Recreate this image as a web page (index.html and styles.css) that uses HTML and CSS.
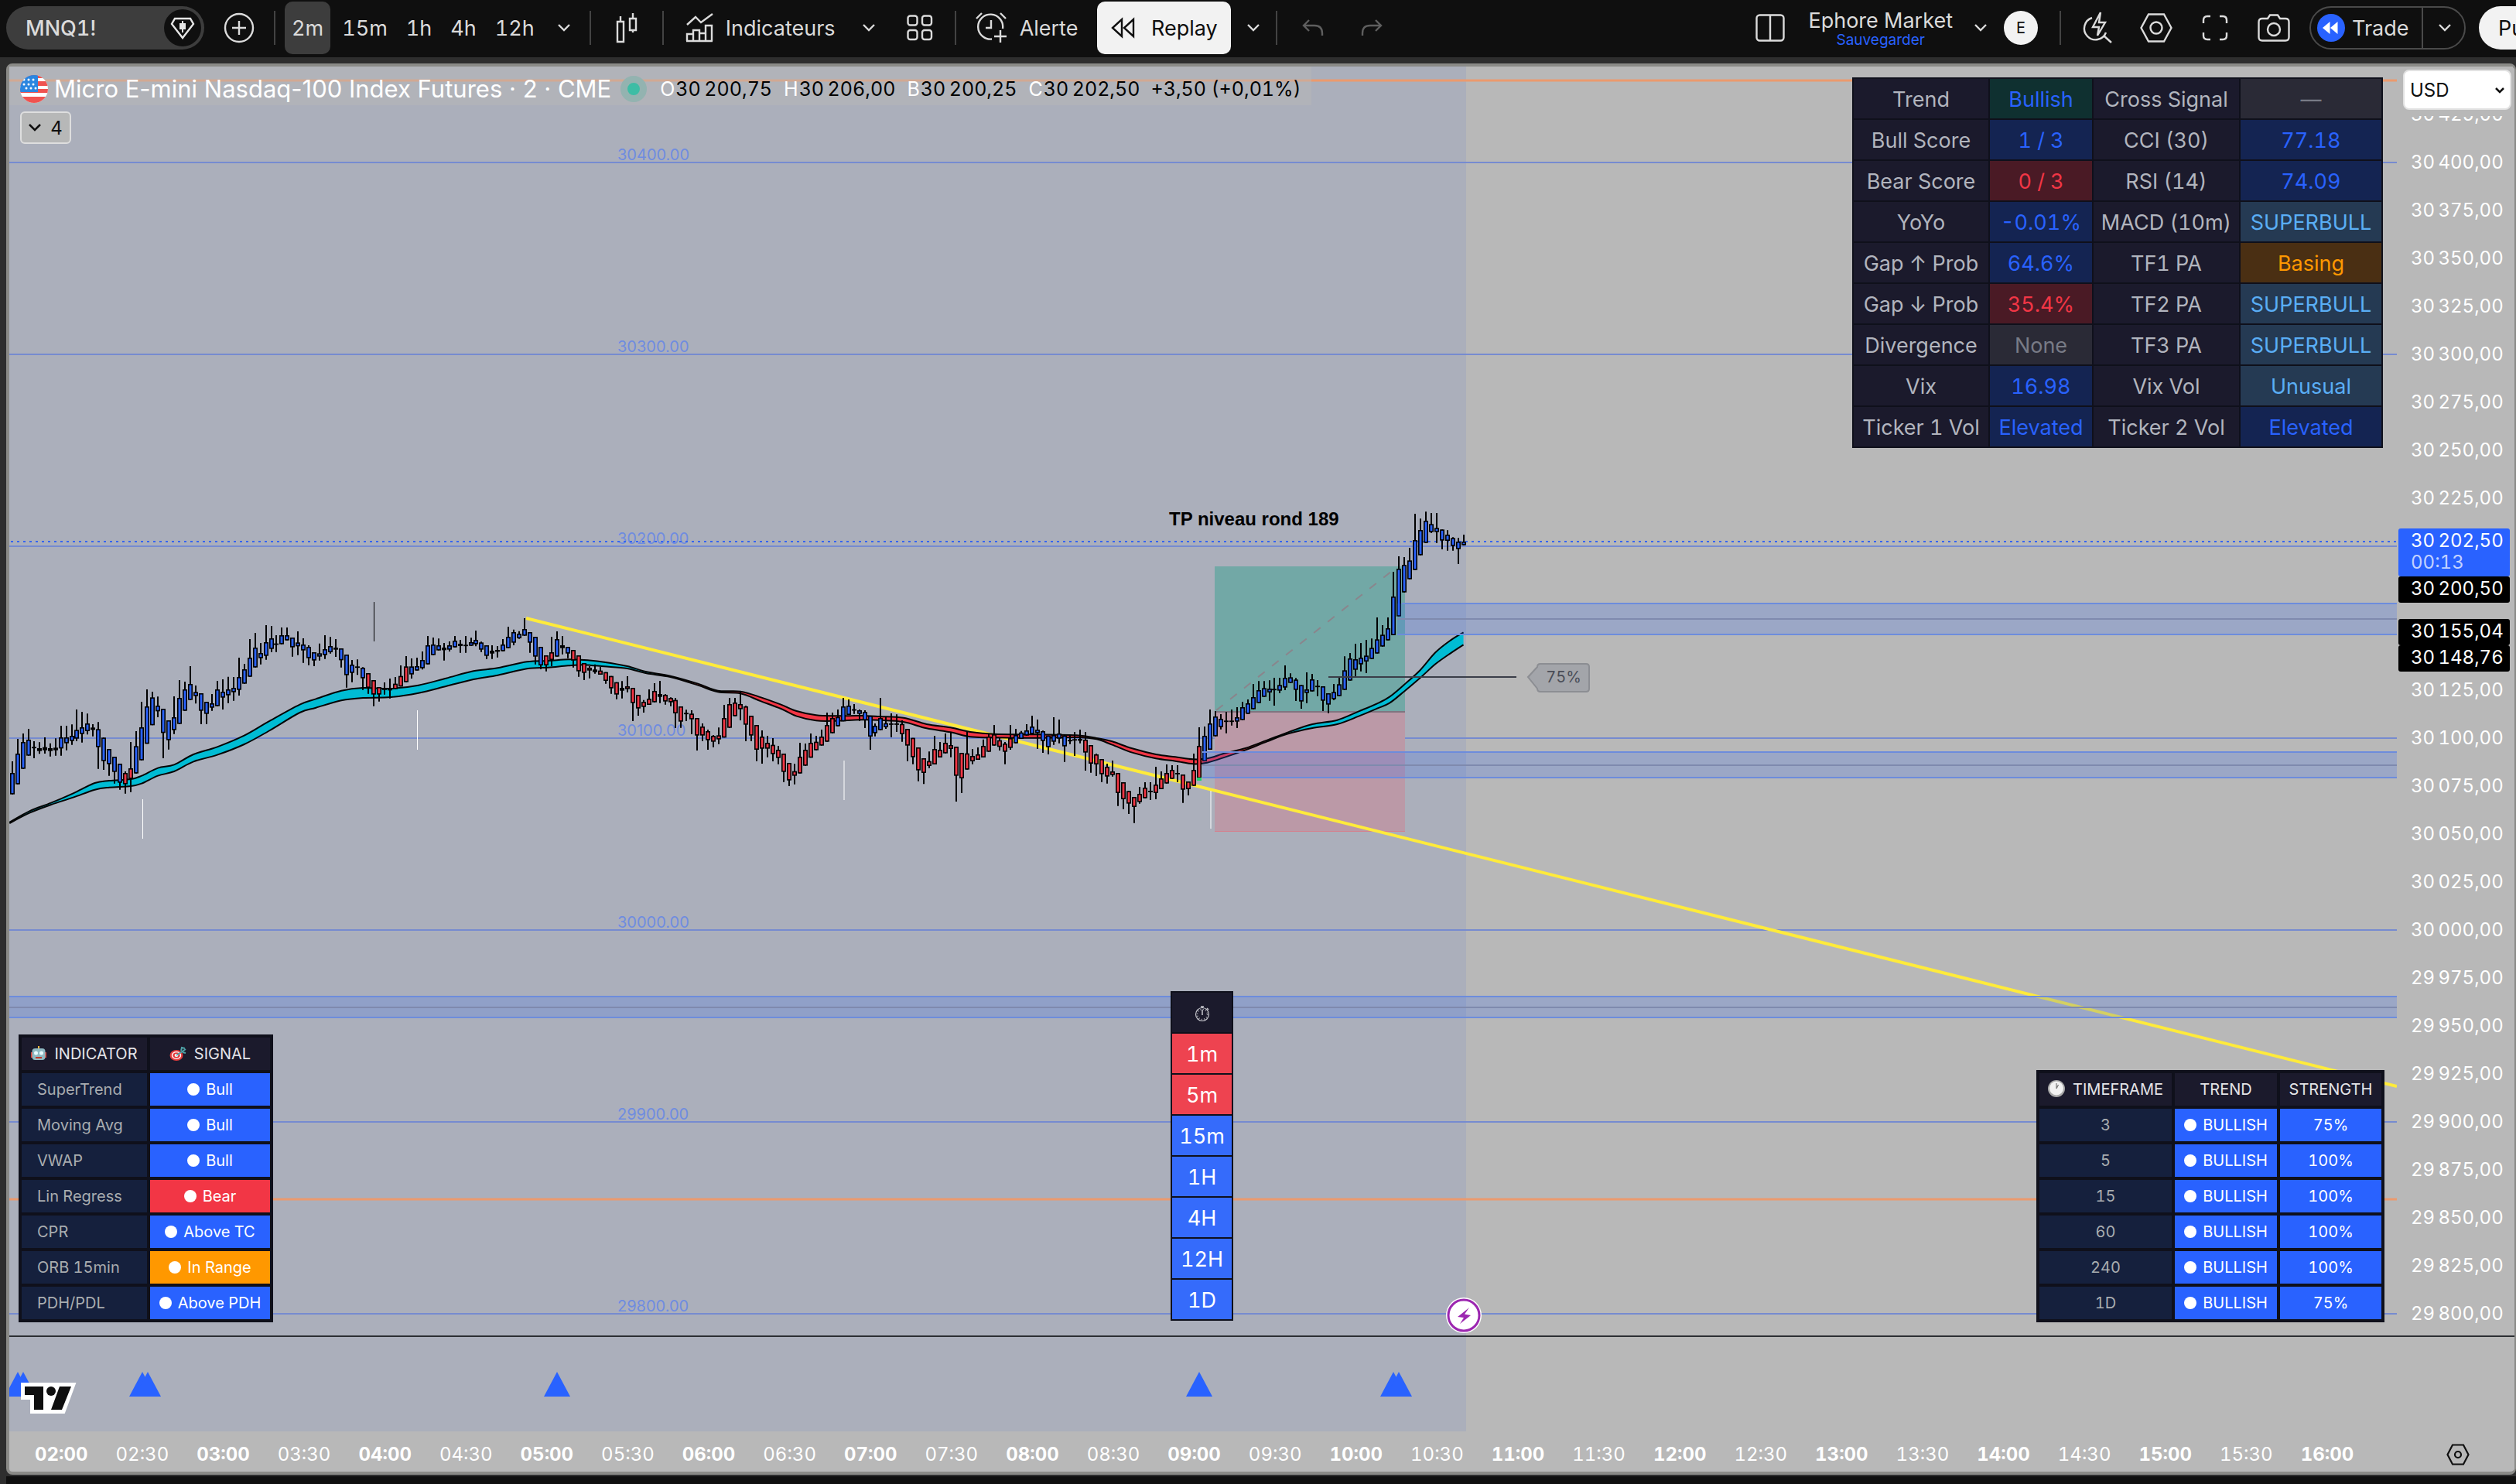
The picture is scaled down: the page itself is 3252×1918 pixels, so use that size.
FILE: index.html
```html
<!DOCTYPE html>
<html lang="fr">
<head>
<meta charset="utf-8">
<title>MNQ1! 30 202,50</title>
<link rel="stylesheet" href="styles.css">
</head>
<body>
<header class="toolbar">
  <button class="symbol" type="button">
    <span>MNQ1!</span>
    <svg class="symbol-badge" viewBox="0 0 48 48" width="48" height="48"><circle cx="24" cy="24" r="24" fill="#0f0f0f"/><path d="M14 12h20l4 7-14 18L10 19z" fill="none" stroke="#e6e6e6" stroke-width="2.4"/><path d="M20 18h8v8h-8z" fill="#e6e6e6"/><path d="M24 15v15" stroke="#e6e6e6" stroke-width="2"/></svg>
  </button>
  <button class="tool add" type="button" aria-label="Comparer"><svg viewBox="0 0 40 40" width="40" height="40"><circle cx="20" cy="20" r="18"/><path d="M20 11v18M11 20h18"/></svg></button>
  <span class="sep"></span>
  <div class="intervals">
    <button class="tool active" type="button">2m</button>
    <button class="tool" type="button">15m</button>
    <button class="tool" type="button">1h</button>
    <button class="tool" type="button">4h</button>
    <button class="tool" type="button">12h</button>
  </div>
  <button class="tool caret wide" type="button" aria-label="Intervalles"><svg viewBox="0 0 16 10" width="16" height="10"><path d="M1 1l7 7 7-7"/></svg></button>
  <span class="sep"></span>
  <button class="tool candle-btn" type="button" aria-label="Type de graphique"><svg viewBox="0 0 28 40" width="28" height="40"><path d="M2 12h8v26H2zM18 8h8v15h-8zM6 12V5M22 8V1M22 23v3"/></svg></button>
  <span class="sep"></span>
  <button class="tool indicators" type="button"><svg viewBox="0 0 36 38" width="36" height="38"><path d="M2 15L13 5l7 7L35 1M2 36V27h8v9M10 36V22h8v14M18 36V26h8M26 36V16h8v20M1 36h34"/></svg><span>Indicateurs</span></button>
  <button class="tool caret" type="button" aria-label="Favoris"><svg viewBox="0 0 16 10" width="16" height="10"><path d="M1 1l7 7 7-7"/></svg></button>
  <button class="tool templates" type="button" aria-label="Modèles"><svg viewBox="0 0 34 34" width="34" height="34"><rect x="1.5" y="1.5" width="12" height="12" rx="3"/><rect x="20" y="1.5" width="12" height="12" rx="3"/><rect x="1.5" y="20" width="12" height="12" rx="3"/><rect x="20" y="20" width="12" height="12" rx="3"/></svg></button>
  <span class="sep"></span>
  <button class="tool alert" type="button"><svg viewBox="0 0 42 42" width="42" height="42"><path d="M22 35.500A16 16 0 1 1 36 22M21 11v10h-7M2 9l7-7M33 2l7 7M33 24v16M25 32h16"/></svg><span>Alerte</span></button>
  <button class="tool replay" type="button"><svg viewBox="0 0 32 28" width="32" height="28"><path d="M14 3v22L2 14zM29 3v22L17 14z"/></svg><span>Replay</span></button>
  <button class="tool caret" type="button" aria-label="Options"><svg viewBox="0 0 16 10" width="16" height="10"><path d="M1 1l7 7 7-7"/></svg></button>
  <span class="sep"></span>
  <button class="tool history first" type="button" aria-label="Annuler"><svg viewBox="0 0 28 24" width="28" height="24"><path d="M9 2L2 9l7 7M2 9h14q10 0 10 10v3"/></svg></button>
  <button class="tool history" type="button" aria-label="Rétablir"><svg viewBox="0 0 28 24" width="28" height="24"><path d="M19 2l7 7-7 7M26 9H12Q2 9 2 19v3"/></svg></button>

  <div class="right">
    <button class="tool layout-btn" type="button" aria-label="Disposition"><svg viewBox="0 0 38 36" width="38" height="36"><rect x="1.500" y="1.500" width="35" height="33" rx="4"/><path d="M19 2v32"/></svg></button>
    <div class="account"><span class="name">Ephore Market</span><a href="#save">Sauvegarder</a></div>
    <button class="tool caret" type="button" aria-label="Dispositions"><svg viewBox="0 0 16 10" width="16" height="10"><path d="M1 1l7 7 7-7"/></svg></button>
    <span class="avatar">E</span>
    <span class="sep"></span>
    <button class="tool icon" type="button" aria-label="Recherche rapide"><svg viewBox="0 0 40 42" width="40" height="42"><path d="M13 8A14.500 14.500 0 1 0 31 27M28 31l10 9M24 1L14 20h8l-2 11 10-17h-8z"/></svg></button>
    <button class="tool icon" type="button" aria-label="Paramètres"><svg viewBox="0 0 42 38" width="42" height="38"><path d="M11 1.500h20L40.500 19 31 36.500H11L1.500 19z"/><circle cx="21" cy="19" r="7.500"/></svg></button>
    <button class="tool icon" type="button" aria-label="Plein écran"><svg viewBox="0 0 34 34" width="34" height="34"><path d="M2 11V7q0-5 5-5h4M23 2h4q5 0 5 5v4M32 23v4q0 5-5 5h-4M11 32H7q-5 0-5-5v-4"/></svg></button>
    <button class="tool icon" type="button" aria-label="Capture"><svg viewBox="0 0 42 36" width="42" height="36"><path d="M6 6h7l3-4.500h10L29 6h7q4.500 0 4.500 4.500V30q0 4.500-4.500 4.500H6Q1.500 34.500 1.500 30V10.500Q1.500 6 6 6z"/><circle cx="21" cy="20" r="8"/></svg></button>
    <div class="trade">
      <button class="trade-main" type="button"><svg viewBox="0 0 36 36" width="36" height="36"><circle cx="18" cy="18" r="18" fill="#2962ff"/><path d="M16.500 10v16L7 18zM26.500 10v16L17 18z" fill="#fff"/></svg><span>Trade</span></button>
      <button class="trade-more" type="button" aria-label="Brokers"><svg viewBox="0 0 16 10" width="16" height="10"><path d="M1 1l7 7 7-7"/></svg></button>
    </div>
    <button class="publish" type="button">Publier</button>
  </div>
</header>

<main class="panel">
  <section class="plot">
    <svg id="plot" class="canvas" viewBox="12 86 3086 1640" preserveAspectRatio="none">
      <rect class="session" x="12" y="86" width="1883" height="1640"/>
      <g id="grid"></g>
      <g class="level"><path d="M12 104H3098"/><path d="M12 1550H3098"/></g>
      <path class="last-price" d="M14 700H3098"/>
      <rect class="profit" x="1570" y="732" width="246" height="188"/>
      <rect class="loss" x="1570" y="920" width="246" height="155"/>
      <path class="entry" d="M1570 920h246"/>
      <path class="stop" d="M1570 1074.500h246"/>
      <path class="target" d="M1572 918L1804 734"/>
      <path class="trendline" d="M680 799L3098 1404"/>
      <g id="ribbon"></g>
      <path class="mark-light" d="M184.500 1033v51M539.500 918v51M1091 983v51M1565 1022v49"/>
      <path class="mark-dark" d="M483.500 778v51"/>
      <g id="bars"></g>
      <path class="mark-buy" d="M1547 1005h6v4h-6z"/>
      <g class="zone">
        <path d="M1806 780H3098V820H1806z"/><path d="M1554 972H3098v33H1554z"/><path d="M12 1288H3098v27H12z"/>
      </g>
      <path class="zone-edge" d="M1812 780H3098M1806 820H3098M1554 972H3098M1554 1005H3098M12 1288H3098M12 1315H3098"/>
      <path class="zone-mid" d="M1806 800H3098M1554 989H3098M12 1302H3098"/>
      <path class="ray" d="M1717 875H1960"/>
      <path class="tag" d="M1975 875l12-13q0-4 4-4h59q4 0 4 4v28q0 4-4 4h-59q-4 0-4-4z"/>
      <text class="tag-text" x="2021" y="882">75%</text>
      <text class="note" x="1511" y="679">TP niveau rond 189</text>
      <g class="event"><circle class="halo" cx="1892" cy="1700" r="23"/><circle class="ring" cx="1892" cy="1700" r="20"/><path d="M1899 1690l-15 12 8 1-5 8 14-11-8-1.500z"/></g>
    </svg>

    <div class="legend">
      <svg viewBox="0 0 36 36" width="36" height="36"><defs><clipPath id="round"><circle cx="18" cy="18" r="18"/></clipPath></defs><g clip-path="url(#round)"><path d="M0 0h36v36H0z" fill="#fff"/><path d="M0 0h36v4H0zM0 8h36v6H0zM0 18h36v5H0zM0 28h36v8H0z" fill="#ef5350"/><path d="M0 0h23v22H0z" fill="#2a86e0"/><g fill="#fff"><circle cx="5" cy="6" r="1.500"/><circle cx="11" cy="6" r="1.500"/><circle cx="17" cy="6" r="1.500"/><circle cx="5" cy="12" r="1.500"/><circle cx="11" cy="12" r="1.500"/><circle cx="17" cy="12" r="1.500"/><circle cx="8" cy="17" r="1.500"/><circle cx="14" cy="17" r="1.500"/><circle cx="20" cy="17" r="1.500"/></g></g></svg>
      <h1>Micro E-mini Nasdaq-100 Index Futures · 2 · CME</h1>
      <span class="status"></span>
      <dl>
        <div><dt>O</dt><dd>30&#8201;200,75</dd></div>
        <div><dt>H</dt><dd>30&#8201;206,00</dd></div>
        <div><dt>B</dt><dd>30&#8201;200,25</dd></div>
        <div><dt>C</dt><dd>30&#8201;202,50</dd></div>
      </dl>
      <span class="change">+3,50 (+0,01%)</span>
    </div>
    <button class="collapse" type="button"><svg viewBox="0 0 16 10" width="16" height="10"><path d="M1 1l7 7 7-7"/></svg><span>4</span></button>

    <table class="board scores">
      <colgroup><col class="c1"><col class="c2"><col class="c3"><col class="c4"></colgroup>
      <tbody>
      <tr><th>Trend</th><td class="teal">Bullish</td><th>Cross Signal</th><td class="mute">—</td></tr>
      <tr><th>Bull Score</th><td class="blue">1 / 3</td><th>CCI (30)</th><td class="blue">77.18</td></tr>
      <tr><th>Bear Score</th><td class="red">0 / 3</td><th>RSI (14)</th><td class="blue">74.09</td></tr>
      <tr><th>YoYo</th><td class="blue">-0.01%</td><th>MACD (10m)</th><td class="sky">SUPERBULL</td></tr>
      <tr><th>Gap ↑ Prob</th><td class="blue">64.6%</td><th>TF1 PA</th><td class="amber">Basing</td></tr>
      <tr><th>Gap ↓ Prob</th><td class="red">35.4%</td><th>TF2 PA</th><td class="sky">SUPERBULL</td></tr>
      <tr><th>Divergence</th><td class="mute">None</td><th>TF3 PA</th><td class="sky">SUPERBULL</td></tr>
      <tr><th>Vix</th><td class="blue">16.98</td><th>Vix Vol</th><td class="sky">Unusual</td></tr>
      <tr><th>Ticker 1 Vol</th><td class="blue">Elevated</td><th>Ticker 2 Vol</th><td class="blue">Elevated</td></tr>
      </tbody>
    </table>

    <table class="board signals">
      <colgroup><col class="c1"><col class="c2"></colgroup>
      <thead><tr>
        <th><svg viewBox="0 0 20 20" width="20" height="20"><path d="M9 0h2v4H9z" fill="#f4b63f"/><path d="M0 8h2v7H0zM18 8h2v7h-2z" fill="#d9433a"/><rect x="1.500" y="3" width="17" height="15" rx="4" fill="#8fb9c2"/><circle cx="6.500" cy="9" r="2.500" fill="#e8fbff"/><circle cx="13.500" cy="9" r="2.500" fill="#e8fbff"/><path d="M6 14h8v2H6z" fill="#c0392b"/></svg>INDICATOR</th>
        <th><svg viewBox="0 0 22 20" width="22" height="20"><ellipse cx="9" cy="12" rx="8.500" ry="7" fill="#e23b3b"/><ellipse cx="9" cy="12" rx="6.200" ry="5" fill="#fff"/><ellipse cx="9" cy="12" rx="4.800" ry="3.800" fill="#e23b3b"/><ellipse cx="9" cy="12" rx="2.400" ry="1.900" fill="#fff"/><path d="M9 12L21 4M15 6l1-4 4 1M17 8l4 1" stroke="#4fa3a8" stroke-width="2" fill="none"/></svg>SIGNAL</th>
      </tr></thead>
      <tbody>
      <tr><th>SuperTrend</th><td class="bull"><i></i>Bull</td></tr>
      <tr><th>Moving Avg</th><td class="bull"><i></i>Bull</td></tr>
      <tr><th>VWAP</th><td class="bull"><i></i>Bull</td></tr>
      <tr><th>Lin Regress</th><td class="bear"><i></i>Bear</td></tr>
      <tr><th>CPR</th><td class="bull"><i></i>Above TC</td></tr>
      <tr><th>ORB 15min</th><td class="range"><i></i>In Range</td></tr>
      <tr><th>PDH/PDL</th><td class="bull"><i></i>Above PDH</td></tr>
      </tbody>
    </table>

    <table class="board frames">
      <thead><tr><th aria-label="Intervalle"><svg viewBox="0 0 22 22" width="22" height="22" fill="none" stroke="#c9c9cf"><circle cx="11" cy="12" r="8.500" stroke-width="1.200"/><circle cx="11" cy="12" r="6.500" stroke-width="1.500" stroke-dasharray="1 2.400"/><path d="M11 13V6M9 2h4M11 2v2M17 4l2 2" stroke-width="1.500"/></svg></th></tr></thead>
      <tbody>
      <tr><td class="bear">1m</td></tr><tr><td class="bear">5m</td></tr><tr><td class="bull">15m</td></tr><tr><td class="bull">1H</td></tr><tr><td class="bull">4H</td></tr><tr><td class="bull">12H</td></tr><tr><td class="bull">1D</td></tr>
      </tbody>
    </table>

    <table class="board strength">
      <colgroup><col class="c1"><col class="c2"><col class="c3"></colgroup>
      <thead><tr>
        <th><svg viewBox="0 0 22 22" width="22" height="22"><circle cx="11" cy="11" r="11" fill="#a9a9a9"/><circle cx="11" cy="10.500" r="9" fill="#f2f2f2"/><path d="M11 11V4M11 11l2.500-5" stroke="#777" stroke-width="1.200"/></svg>TIMEFRAME</th><th>TREND</th><th>STRENGTH</th>
      </tr></thead>
      <tbody>
      <tr><th>3</th><td class="bull"><i></i>BULLISH</td><td class="bull">75%</td></tr>
      <tr><th>5</th><td class="bull"><i></i>BULLISH</td><td class="bull">100%</td></tr>
      <tr><th>15</th><td class="bull"><i></i>BULLISH</td><td class="bull">100%</td></tr>
      <tr><th>60</th><td class="bull"><i></i>BULLISH</td><td class="bull">100%</td></tr>
      <tr><th>240</th><td class="bull"><i></i>BULLISH</td><td class="bull">100%</td></tr>
      <tr><th>1D</th><td class="bull"><i></i>BULLISH</td><td class="bull">75%</td></tr>
      </tbody>
    </table>
  </section>

  <aside class="prices">
    <svg id="prices" class="canvas" viewBox="3098 86 152 1640" preserveAspectRatio="none"></svg>
    <label class="currency" aria-label="Devise">
      <select aria-label="Devise"><option>USD</option></select>
      <svg viewBox="0 0 14 10" width="14" height="10"><path d="M2 2l5 5 5-5"/></svg>
    </label>
  </aside>

  <section class="signal-pane">
    <svg class="canvas" viewBox="12 1728 3238 122" preserveAspectRatio="none">
      <rect class="session" x="12" y="1728" width="1883" height="122"/>
      <g id="arrows" class="arrows"></g>
      <g class="logo"><path class="logo-rim" d="M28 1788H97L83 1826H40V1808H28z"/><path d="M32 1792H56V1822H44V1803H32zM77 1792H92L80 1822H66z"/><circle cx="66" cy="1798" r="6"/></g>
    </svg>
  </section>

  <footer class="times">
    <div id="times" class="time-list"></div>
    <button class="axis-settings" type="button" aria-label="Réglages de l'axe"><svg viewBox="0 0 30 28" width="30" height="28"><path d="M8 1.500h14L28.500 14 22 26.500H8L1.500 14z"/><circle cx="15" cy="14" r="4"/></svg></button>
  </footer>
</main>
<div class="dock"></div>
<script src="chart.js"></script>
</body>
</html>
```
FILE: styles.css
```css
* { box-sizing: border-box; }
body {
  margin: 0;
  min-height: 100vh;
  display: flex;
  flex-direction: column;
  background: #2e2e2e;
  color: #dbdbdb;
  font-family: Inter, "Liberation Sans", sans-serif;
  font-variant-numeric: tabular-nums;
  overflow: hidden;
}
button, select { font: inherit; font-variant-numeric: inherit; color: inherit; margin: 0; padding: 0; border: 0; background: none; }
svg { display: block; flex: none; }

/* Toolbar */
.toolbar {
  height: 74px;
  flex: none;
  display: flex;
  align-items: center;
  padding: 0 0 2px 8px;
  background: #0f0f0f;
  font-size: 27px;
  overflow: hidden;
}
.toolbar svg { fill: none; stroke: #dbdbdb; stroke-width: 2.4; }
.toolbar .symbol-badge { stroke: none; }
.symbol {
  width: 256px;
  height: 56px;
  display: flex;
  align-items: center;
  justify-content: space-between;
  padding: 0 4px 0 25px;
  border-radius: 28px;
  background: #3d3d3d;
  font-weight: 500;
}
.tool { display: flex; align-items: center; justify-content: center; height: 68px; border-radius: 10px; flex: none; }
.add { width: 90px; }
.sep { width: 2px; height: 44px; background: #434343; flex: none; }
.intervals { display: flex; gap: 6px; margin-left: 12px; }
.intervals .tool { padding: 0 9px; }
.active { background: #3d3d3d; }
.caret { width: 56px; }
.caret.wide { width: 58px; margin-right: 4px; }
.candle-btn { width: 92px; }
.indicators { gap: 16px; padding-left: 28px; }
.indicators + .caret { width: 86px; }
.templates { width: 46px; margin-right: 22px; }
.alert { gap: 16px; padding: 0 25px 0 24px; }
.replay { gap: 20px; width: 173px; background: #f2f2f2; color: #0f0f0f; }
.toolbar .replay svg { stroke: #0f0f0f; }
.replay + .caret { width: 58px; }
.history { width: 76px; }
.history.first { margin-left: 8px; }
.toolbar .history svg { stroke: #5e5e5e; }
.right { display: flex; align-items: center; margin-left: auto; margin-right: -80px; }
.layout-btn { width: 98px; }
.account { display: flex; flex-direction: column; align-items: center; padding-top: 4px; line-height: 28px; }
.account a { color: #2962ff; font-size: 19px; line-height: 22px; text-decoration: none; }
.account + .caret { width: 66px; padding-left: 6px; }
.avatar { width: 44px; height: 44px; margin-right: 28px; border-radius: 50%; background: #f2f2f2; color: #0f0f0f; font-size: 20px; line-height: 44px; text-align: center; }
.icon { width: 76px; }
.avatar + .sep { margin-right: 9px; }
.trade { display: flex; height: 56px; width: 202px; margin-left: 8px; border: 2px solid #4a4a4a; border-radius: 28px; }
.trade-main { display: flex; align-items: center; gap: 9px; width: 145px; padding-left: 8px; border-right: 2px solid #4a4a4a; }
.toolbar .trade-main svg { stroke: none; }
.trade-more { flex: 1; padding-left: 20px; }
.publish { width: 128px; height: 56px; margin-left: 17px; padding-left: 25px; border-radius: 28px; background: #f2f2f2; color: #0f0f0f; text-align: left; }

/* Chart panel */
.panel {
  flex: 1;
  display: grid;
  grid-template-columns: 1fr 152px;
  grid-template-rows: 1fr 2px 122px 52px;
  margin: 8px 0 2px 8px;
  border: 4px solid #8a8a87;
  border-right-width: 2px;
  border-radius: 8px;
  background: #b8b8b8 linear-gradient(#2c2f33, #2c2f33) 0 calc(100% - 174px) / 100% 2px no-repeat;
}
.plot { position: relative; min-height: 0; }
.prices { position: relative; min-height: 0; }
.canvas { position: absolute; inset: 0; width: 100%; height: 100%; }
.signal-pane { position: relative; grid-row: 3; grid-column: 1 / 3; }
.session { fill: #abafbb; }
.dock { height: 10px; margin-left: 8px; background: #0f0f0f; }

.gridline { stroke: #768bd0; stroke-width: 2; }
.grid-label { fill: #6f8ce0; font-size: 20px; font-variant-numeric: normal; }
.level { fill: none; stroke: #eb9a6e; stroke-width: 3; }
.last-price { stroke: #3565f2; stroke-width: 2; stroke-dasharray: 3 5; }
.profit { fill: #72a8a6; }
.loss { fill: #bb99a7; }
.entry { stroke: #7f7580; stroke-width: 2; }
.stop { stroke: #d4808e; stroke-width: 1; }
.target { stroke: #8a858c; stroke-width: 2; stroke-dasharray: 11 12; }
.trendline { stroke: #ffeb3b; stroke-width: 4; }
.rib-up { fill: #00bcd4; }
.rib-down { fill: #f23645; }
.rib-edge { fill: none; stroke: #050505; stroke-width: 2; stroke-linejoin: round; }
.mark-light { stroke: #fff; stroke-width: 1; }
.mark-dark { stroke: #000; stroke-width: 1; }
.mark-buy { fill: #1fd26a; }
.wick { stroke: #000; stroke-width: 2; }
.bar { stroke: #000; stroke-width: 1.6; }
.bar.b { fill: #2962ff; }
.bar.r { fill: #f23645; }
.bar.k { fill: #000; }
.zone { fill: #2962ff; fill-opacity: .2; }
.zone-edge { stroke: #6d8cdc; stroke-width: 2; }
.zone-mid { stroke: #7f8aae; stroke-width: 2; }
.ray { stroke: #3a3d48; stroke-width: 2; }
.tag { fill: #a3a5aa; stroke: #8c8e93; stroke-width: 2; }
.tag-text { fill: #4a4d57; font-size: 20px; text-anchor: middle; }
.note { fill: #000; font: bold 24px "Liberation Sans", Arial, sans-serif; }
.event { fill: #9c27b0; }
.event .halo { fill: #fff; }
.event .ring { fill: #fff; stroke: #9c27b0; stroke-width: 3; }

.legend {
  position: relative;
  display: flex;
  align-items: center;
  width: max-content;
  height: 50px;
  padding: 7px 14px 0;
  background: rgba(184, 184, 184, .5);
  color: #000;
  font-size: 25px;
}
.legend h1 { margin: 0 12px 0 8px; color: #fff; font-size: 31px; font-weight: 400; font-variant-numeric: normal; line-height: 36px; }
.status { width: 34px; height: 34px; margin-right: 17px; border: 9px solid #93b3b0; border-radius: 50%; background: #3dbda5; }
.legend dl { display: flex; gap: 15px; margin: 0 14px 0 0; }
.legend dl div { display: flex; gap: 1px; }
.legend dt { color: #fff; }
.legend dd { margin: 0; }
.collapse {
  position: relative;
  display: flex;
  align-items: center;
  justify-content: center;
  gap: 12px;
  width: 66px;
  height: 42px;
  margin: 8px 0 0 14px;
  border: 2px solid #dedede;
  border-radius: 6px;
  background: #b7b8b8;
  color: #0f0f0f;
  font-size: 24px;
}
.collapse svg { fill: none; stroke: #0f0f0f; stroke-width: 2.5; }

/* Indicator tables laid over the chart */
.board { position: absolute; table-layout: fixed; background: #0f101b; border-collapse: separate; text-align: center; white-space: nowrap; }
.board th, .board td { padding: 0; font-weight: 400; }
.board th { background: #1b1a2c; color: #b2b5be; }
.board .bull { background: #2962ff; color: #fff; }
.board .bear { background: #f23645; color: #fff; }
.board .range { background: #ff9800; color: #fff; }
.board i { display: inline-block; width: 16px; height: 16px; margin-right: 8px; border-radius: 50%; background: #fff; vertical-align: -1px; }

.scores { top: 14px; right: 18px; width: 686px; border-spacing: 2px; font-size: 27px; }
.scores th, .scores td { height: 51px; padding-top: 2px; }
.scores .c1 { width: 174px; }
.scores .c2 { width: 132px; }
.scores .c3 { width: 188px; }
.scores .c4 { width: 182px; }
.scores .teal { background: #0f3030; color: #2962ff; }
.scores .blue { background: #142452; color: #2962ff; }
.scores .red { background: #4a1a25; color: #f23645; }
.scores .sky { background: #253a53; color: #5aaef5; }
.scores .amber { background: #4a2f13; color: #ff9800; }
.scores .mute { background: #2a2a36; color: #787b86; }

.signals, .strength { bottom: 17px; border-spacing: 4px; font-size: 20px; }
.signals th, .signals td, .strength th, .strength td { height: 42px; }
.signals tbody th, .strength tbody th { background: #15203d; color: #a9adb0; }
.signals thead th, .strength thead th { color: #e4e4e8; }
.signals thead svg, .strength thead svg { display: inline-block; margin-right: 10px; vertical-align: -3px; }
.signals { left: 12px; width: 329px; }
.signals .c1 { width: 162px; }
.signals .c2 { width: 155px; }
.signals tbody th { padding-left: 20px; text-align: left; }
.strength { right: 16px; width: 450px; }
.strength .c1 { width: 171px; }
.strength .c2 { width: 132px; }
.strength .c3 { width: 131px; }

.frames { left: 48.64%; bottom: 19px; width: 81px; border-spacing: 2px; font-size: 27px; }
.frames th, .frames td { height: 51px; padding-top: 2px; }
.frames svg { margin: 0 auto; }
.frames .bull { background: #356bfb; }
.frames .bear { background: #ee4350; }

/* Price axis */
.price { fill: #fff; font-size: 24px; }
.price-mask { fill: #b8b8b8; }
.price-tag { fill: #000; }
.price-tag.last { fill: #2962ff; }
.countdown { fill: #c3d2ff; font-size: 24px; }
.currency { position: relative; display: block; width: 140px; height: 52px; margin: 4px 0 0 8px; }
.currency select { width: 100%; height: 100%; padding-left: 7px; appearance: none; border: 2px solid #e2e2e2; border-radius: 8px; background: #fff; color: #0f0f0f; font-size: 24px; }
.currency svg { position: absolute; right: 8px; top: 22px; fill: none; stroke: #0f0f0f; stroke-width: 2.5; }

/* Lower pane and time axis */
.arrows { fill: #2962ff; }
.logo { fill: #0f0f0f; }
.logo-rim { fill: #fff; stroke: #fff; stroke-width: 2; }
.times { grid-row: 4; grid-column: 1 / 3; display: flex; align-items: center; padding-top: 8px; }
.time-list { flex: 1; display: flex; padding-left: 15px; color: #fff; font-size: 24px; line-height: 28px; }
.time-list span { flex: 1 1 0; text-align: center; }
.time-list .hour { font-weight: 700; }
.axis-settings { width: 190px; padding-left: 102px; }
.axis-settings svg { fill: none; stroke: #0f0f0f; stroke-width: 2.2; }
```
FILE: chart.js
```js
const SVG = 'http://www.w3.org/2000/svg';
function add(parent, tag, attrs, text) {
  const el = document.createElementNS(SVG, tag);
  for (const key in attrs) el.setAttribute(key, attrs[key]);
  if (text) el.textContent = text;
  parent.appendChild(el);
  return el;
}
const byId = id => document.getElementById(id);
const priceY = price => 706 - (price - 30200) * 2.481;
const barX = index => 15.8 + index * 6.973;

// Round-number levels
for (let p = 30400; p >= 29800; p -= 100) {
  add(byId('grid'), 'path', { class: 'gridline', d: `M12 ${Math.round(priceY(p))}H3098` });
  add(byId('grid'), 'text', { class: 'grid-label', x: 798, y: Math.round(priceY(p)) - 3 }, p + '.00');
}

// Bars: high, body top, body bottom, low in thirds of a unit below the segment base,
// then b (up), r (down) or k (flat).
const segments = [
  [700, `852 897 980 980b 765 822 941 941b 744 777 881 881b 726 768 830 830b 774 796 799 840k 778 801 812 823k 759 797 809 822k 782 801 812 833k 763 799 809 830k 714 759 802 830b 714 759 782 809b 709 753 773 788b 651 730 764 773b 660 720 746 779b 667 705 735 748b 708 721 730 755b 700 727 797 881b 760 760 851 885b 804 804 863 908b 834 834 893 938b 861 861 935 962b 891 897 941 977r 777 879 920 971r 735 793 899 899b 621 720 848 848b 573 639 784 784b 582 604 712 712b 601 636 658 681b 648 648 742 840b 693 693 770 806b 600 681 731 746b 537 606 707 707b 543 573 656 656b 483 552 614 614b 558 583 599 628b 588 588 656 708b 621 621 668 707b 591 627 644 656b 540 573 638 638b 534 582 605 651b 524 573 596 626b 525 567 584 617b 450 525 575 597b 474 495 551 551b 378 450 524 524b 354 411 488 488b 393 432 452 476b 324 390 443 458b 327 375 416 428b 363 395 398 428k 333 363 398 398b 333 363 383 383b 372 372 410 446b 348 391 406 440b 375 399 422 470b 402 408 452 479b 429 429 461 483b 395 433 446 461b 363 417 440 455b 370 405 429 434b 378 411 419 447b 414 414 460 488b 438 438 518 566b 459 477 509 545b 457 484 487 517k 487 489 530 575b 510 510 567 590r 537 537 593 638r 564 564 593 620r 546 570 573 593k 531 570 577 608k 525 551 572 572r 480 521 562 562r 444 484 545 545r 453 484 515 531b 450 483 500 500b 426 459 491 496b 366 402 476 476b 372 399 440 440b 376 402 422 422b 393 411 421 461k 387 402 419 426b 366 384 410 410b 381 396 405 431k 366 400 403 431k 373 390 404 404b 345 381 398 406b 388 391 419 428b 402 402 443 455b 402 423 434 455k 405 420 427 449k 378 399 425 425b 330 369 413 413b 341 351 392 402b 347 357 375 377b 297 339 365 365b 351 351 392 431b 369 369 446 476b 408 408 480 495b 441 441 480 503r 369 429 459 483r 348 378 446 446b 366 402 413 437k 408 408 434 452b 420 420 461 488r 441 441 503 524r 471 471 509 537r 483 489 500 530r 476 496 506 512k 486 500 516 516r 506 506 540 551r 521 521 569 590r 545 545 593 611r`],
  [760, `361 387 398 428k 342 381 392 404r 387 387 446 516r 414 414 467 495r 434 441 461 483r 393 429 453 453r 369 399 443 443r 360 411 422 446k 411 414 440 452r 424 426 443 458r 426 434 486 543r 459 459 518 542r 472 484 488 516k 474 487 509 566r 504 504 572 630r 525 537 572 593r 549 555 590 627r 570 573 596 617r 541 571 587 605r 453 504 580 580r 426 450 542 542r 426 444 497 497r 400 450 470 513r 456 459 530 594r 495 495 572 594r 531 531 627 671r 552 576 623 681r 573 600 623 656r 582 608 644 672r 612 627 659 683r 642 642 713 752r 678 678 746 768r 682 710 728 761r 600 654 719 719r 603 627 689 689r 564 600 658 658r 573 596 629 629r 549 576 611 611r 483 531 596 596r 483 504 563 563r 471 500 536 536b 426 459 517 517b 432 456 492 492b 450 470 473 488k 471 474 488 516b 474 480 513 543b 495 495 576 627b 525 534 563 575b 426 504 551 551b 498 524 540 546b 486 525 528 578k 490 525 528 558k 513 527 567 596r 546 546 611 671r 581 581 656 683r 618 618 707 749r 660 660 717 760r 634 671 690 698r 573 624 684 684r 597 627 657 657r 564 600 641 641r 558 609 624 656r 615 615 728 828r 639 639 738 795r 558 641 704 704r 624 651 672 683r 618 645 666 666r 587 612 657 657r 564 576 635 635r 531 567 611 611r 582 590 616 630r 597 603 635 683r 531 582 620 627r 546 570 602 602b 554 560 585 585b 528 552 572 572b 495 537 566 566b 510 549 563 624b 553 555 593 639b 572 572 617 645b 501 570 596 608b 510 564 584 602b 567 572 614 674b 569 589 592 605k 558 586 589 651k 549 585 592 602k 558 588 638 708r 609 609 681 716r 642 645 684 729r 663 663 722 752r 681 693 731 758r 669 711 725 731r 717 717 795 845r 753 753 819 857r 787 787 836 876r 810 810 849 911r 771 798 830 836r 753 774 815 815r 753 786 789 822k 693 762 795 819r 711 738 780 780r 684 717 758 758r 687 705 740 740r 687 717 720 752k 723 723 782 833r 750 750 780 804r 642 705 767 767r 540 612 738 738r 537 573 672 672b 471 525 627 627b 477 498 575 575b`],
  [630, `879 897 929 938b 870 904 907 953k 861 904 907 923k 852 891 908 933b 831 852 902 902b 822 837 878 878b 762 813 860 860b 751 786 836 836b 751 778 812 812b 748 780 795 827b 738 781 784 846k 738 766 788 797b 690 738 776 786b 721 736 758 758b 739 745 785 828b 766 766 830 858b 717 783 797 836b 723 744 791 791b 747 769 773 809k 771 771 827 867b 798 798 842 875b 762 793 821 825b 736 763 809 809b 655 709 785 785b 642 663 749 749b 606 666 707 738b 603 660 686 713b 591 652 675 720b 586 622 665 665b 504 589 644 644b 534 571 617 617b 504 546 593 593b 327 423 573 573b 267 315 500 500b 270 300 407 407b 234 283 356 356b 102 204 320 320b 121 165 263 263b 94 129 215 215b 99 142 173 177b 99 157 173 215b 163 163 206 240b 166 183 207 245b 193 196 227 245b 196 210 239 297b 183 210 224 224b`]
];
let index = 0;
for (const [base, text] of segments) {
  for (const m of text.matchAll(/(\d+) (\d+) (\d+) (\d+)([brk])/g)) {
    const [high, top, bottom, low] = m.slice(1, 5).map(v => base + v / 3);
    const x = Math.round(barX(index++));
    add(byId('bars'), 'path', { class: 'wick', d: `M${x} ${high}V${low}` });
    add(byId('bars'), 'rect', { class: 'bar ' + m[5], x: x - 2.2, y: top + .8, width: 4.4, height: Math.max(bottom - top - 1.6, .2) });
  }
}

// Moving-average ribbon: bar index, upper edge, lower edge
const ribbon = [[-.5,1088,1092],[3.2,1045,1052],[7.2,1013,1020],[11.3,976,989],[15.3,936,959],[18,927,950],[22,921,945],[24,908,935],[27,878,905],[30,865,888],[33.6,825,850],[38,796,824],[43,752,783],[47.5,698,732],[53.3,632,660],[56.3,610,641],[61,578,613],[65,567,603],[70.2,570,600],[75.3,557,584],[80.4,530,558],[85.5,502,531],[90,490,515],[95.4,466,490],[99.4,462,485],[103,457,478],[106,459,475],[109.7,467,481],[114,483,492],[117.6,505,511],[122,521,525],[127.1,551,557],[130.8,578,583],[135,581,589],[138.8,604,616],[142.5,632,645],[145.4,657,674],[149,673,691],[152.7,676,692],[157.1,675,688],[160.8,678,689],[165.2,683,696],[169.5,708,721],[173.9,721,736],[177.6,738,754],[182,746,757],[190,748,758],[197.3,751,759],[201,762,766],[203.9,775,785],[207.6,802,815],[212,825,838],[215.6,835,848],[218.9,844,859],[221.5,841,854],[224.9,820,832],[228.6,801,808],[232.6,770,775],[236.5,739,745],[241,708,720],[245.6,692,705],[249.6,658,674],[253,628,644],[255.3,602,623],[258,555,578],[261,498,525],[263.8,430,472],[266.6,383,430],[269,352,397]]
  .map(([i, a, b]) => [barX(i), 700 + a / 3, 700 + (b - a > 9 ? b + 3 : b) / 3]);
function curve(points) {
  let d = '';
  for (let i = 0; i < points.length - 1; i++) {
    const p0 = points[i - 1] || points[i], p1 = points[i], p2 = points[i + 1], p3 = points[i + 2] || p2;
    d += `C${p1[0] + (p2[0] - p0[0]) / 6} ${p1[1] + (p2[1] - p0[1]) / 6} ${p2[0] - (p3[0] - p1[0]) / 6} ${p2[1] - (p3[1] - p1[1]) / 6} ${p2[0]} ${p2[1]}`;
  }
  return d;
}
const start = p => `${p[0]} ${p[1]}`;
function band(from, to, cls) {
  const part = ribbon.slice(from, to);
  const upper = part.map(p => [p[0], p[1]]), lower = part.map(p => [p[0], p[2]]).reverse();
  add(byId('ribbon'), 'path', { class: cls, d: `M${start(upper[0])}${curve(upper)}L${start(lower[0])}${curve(lower)}Z` });
}
band(0, 31, 'rib-up');
band(30, 58, 'rib-down');
band(57, ribbon.length, 'rib-up');
for (const side of [1, 2]) {
  const edge = ribbon.map(p => [p[0], p[side]]);
  add(byId('ribbon'), 'path', { class: 'rib-edge', d: `M${start(edge[0])}${curve(edge)}` });
}

// Price axis
const axis = byId('prices');
const format = cents => cents.slice(0, 2) + '\u2009' + cents.slice(2);
for (let p = 30425; p >= 29800; p -= 25) {
  if (p <= 30200 && p >= 30150) continue;
  add(axis, 'text', { class: 'price', x: 3116, y: Math.round(priceY(p)) + 8 }, format(p + ',00'));
}
add(axis, 'rect', { class: 'price-mask', x: 3098, y: 86, width: 150, height: 64 });
add(axis, 'rect', { class: 'price-tag last', x: 3100, y: 683, width: 144, height: 62, rx: 3 });
add(axis, 'text', { class: 'countdown', x: 3116, y: 735 }, '00:13');
add(axis, 'text', { class: 'price', x: 3116, y: 707 }, format('30202,50'));
for (const [y, value] of [[745, '30200,50'], [800, '30155,04'], [834, '30148,76']]) {
  add(axis, 'rect', { class: 'price-tag', x: 3100, y, width: 144, height: 34, rx: 3 });
  add(axis, 'text', { class: 'price', x: 3116, y: y + 24 }, format(value));
}

// Signals in the lower pane
for (const x of [23, 30, 184, 191, 720, 1550, 1801, 1808]) {
  add(byId('arrows'), 'path', { d: `M${x} 1773l17 32h-34z` });
}

// Time axis, one label per half hour
for (let t = 4; t <= 32; t++) {
  const label = document.createElement('span');
  label.textContent = String(t >> 1).padStart(2, '0') + (t % 2 ? ':30' : ':00');
  if (t % 2 === 0) label.className = 'hour';
  byId('times').appendChild(label);
}
```
